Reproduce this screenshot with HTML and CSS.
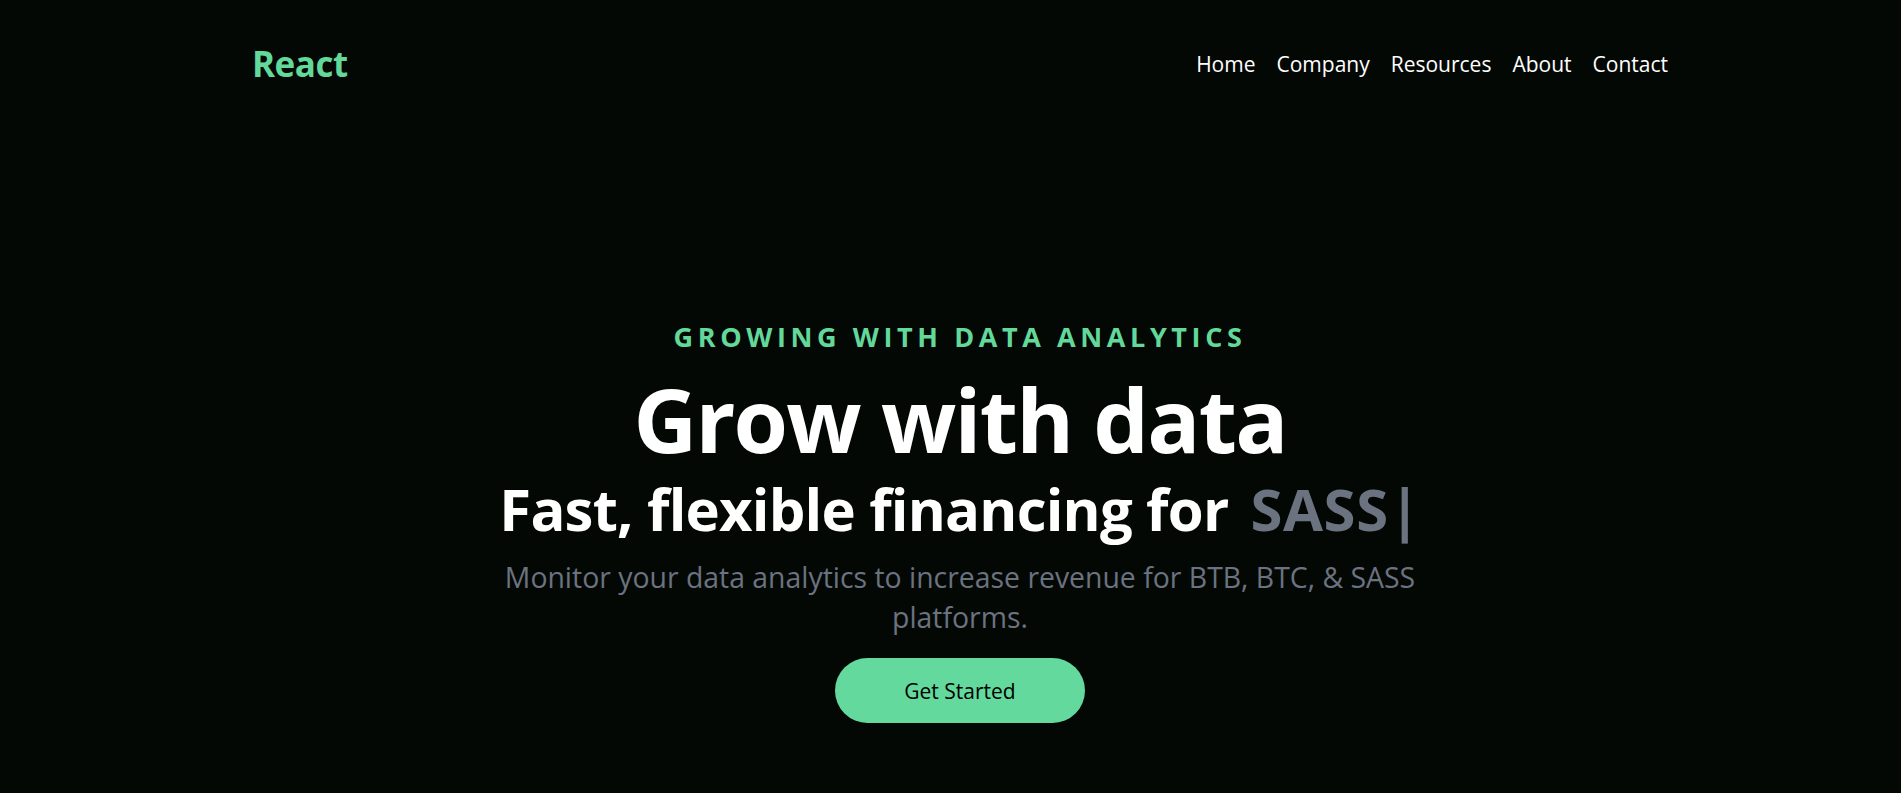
FILE: index.html
```html
<!DOCTYPE html>
<html lang="en">
<head>
<meta charset="utf-8">
<title>React</title>
<link rel="stylesheet" href="styles.css">
</head>
<body>
<div class="page">
  <header class="navbar">
    <div class="logo">React</div>
    <nav>
      <ul class="nav-list">
        <li>Home</li>
        <li>Company</li>
        <li>Resources</li>
        <li>About</li>
        <li>Contact</li>
      </ul>
    </nav>
  </header>
  <section class="hero">
    <p class="eyebrow">GROWING WITH DATA ANALYTICS</p>
    <h1 class="title">Grow with data</h1>
    <div class="typed-row">
      <span class="typed-static">Fast, flexible financing for</span>
      <span class="typed-word">SASS</span><span class="typed-cursor">|</span>
    </div>
    <p class="subtitle">Monitor your data analytics to increase revenue for BTB, BTC, &amp; SASS platforms.</p>
    <button class="cta">Get Started</button>
  </section>
</div>
</body>
</html>
```
FILE: styles.css
```css
html, body {
  margin: 0;
  padding: 0;
  background: #040804;
  overflow: hidden;
}
body {
  font-family: "Open Sans", "Noto Sans", sans-serif;
  color: #ffffff;
}
.page {
  width: 1920px;
  height: 793px;
}
.navbar {
  max-width: 1416px;
  margin: 0 auto;
  padding-top: 40px;
  display: flex;
  align-items: center;
  justify-content: space-between;
}
.logo {
  font-size: 35px;
  font-weight: 700;
  line-height: 48px;
  color: #62d89b;
  letter-spacing: -0.5px;
}
.nav-list {
  list-style: none;
  margin: 0;
  padding: 0;
  display: flex;
  gap: 21px;
}
.nav-list li {
  font-size: 21px;
  line-height: 28px;
  color: #ffffff;
}
.hero {
  padding-top: 231px;
  display: flex;
  flex-direction: column;
  align-items: center;
  text-align: center;
}
.eyebrow {
  margin: 0;
  font-size: 27px;
  line-height: 36px;
  font-weight: 700;
  letter-spacing: 4.6px;
  color: #62d89b;
}
.title {
  margin: 14px 0 0;
  font-size: 88px;
  line-height: 100px;
  font-weight: 700;
  letter-spacing: -1.75px;
}
.typed-row {
  margin-top: 5px;
  display: flex;
  align-items: center;
  justify-content: center;
  font-size: 58px;
  line-height: 70px;
  font-weight: 700;
}
.typed-static {
  letter-spacing: -0.8px;
}
.typed-word {
  padding-left: 22px;
  color: #6b7280;
  letter-spacing: 0.6px;
}
.typed-cursor {
  color: #6b7280;
  font-weight: 700;
}
.subtitle {
  margin: 13px 0 0;
  max-width: 930px;
  font-size: 28.4px;
  line-height: 40px;
  color: #6b7280;
}
.cta {
  margin-top: 21px;
  width: 250px;
  height: 65px;
  border: none;
  border-radius: 33px;
  background: #63d99d;
  color: #000000;
  font-family: "Open Sans", "Noto Sans", sans-serif;
  font-size: 21px;
  cursor: pointer;
}
```
